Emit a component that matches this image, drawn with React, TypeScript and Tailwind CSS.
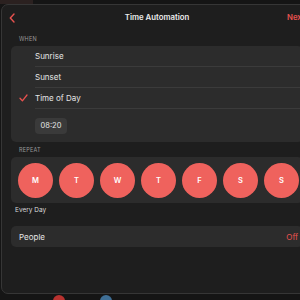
const days = ["M", "T", "W", "T", "F", "S", "S"];

function Row({ label, checked }: { label: string; checked?: boolean }) {
  return (
    <div className="flex h-[20px] items-center">
      <div className="flex w-[24px] items-center justify-center">
        {checked && (
          <svg width="9" height="8" viewBox="0 0 9 8" fill="none">
            <path d="M1 4.2 L3.4 6.8 L8 1" stroke="#e8524f" strokeWidth="1.3" strokeLinecap="round" strokeLinejoin="round" />
          </svg>
        )}
      </div>
      <span className="text-[8px] text-[#e6e6e6]">{label}</span>
    </div>
  );
}

function Divider() {
  return <div className="ml-[24px] h-px bg-[#3b3b3b]" />;
}

export default function App() {
  return (
    <div
      className="relative h-[300px] w-[300px] overflow-hidden bg-[#151515]"
      style={{ fontFamily: "Inter, 'Liberation Sans', sans-serif" }}
    >
      <div className="absolute left-0 top-0 h-[4px] w-[33px] bg-[#2b2120]" />
      <div className="absolute left-[53px] top-[295px] h-[12px] w-[12px] rounded-full bg-[#b8322f]" />
      <div className="absolute left-[100px] top-[295px] h-[12px] w-[12px] rounded-full bg-[#3f6f96]" />

      <div className="relative ml-[1px] mt-[4px] h-[290px] w-[312px] rounded-[7px] border border-[#363636] bg-[#1e1e1e]">
        {/* Header */}
        <div className="relative flex h-[26px] items-center">
          <svg className="absolute left-[7px] top-[8px]" width="6" height="10" viewBox="0 0 6 10" fill="none">
            <path d="M5 1 L1.3 5 L5 9" stroke="#e8524f" strokeWidth="1.4" strokeLinecap="round" strokeLinejoin="round" />
          </svg>
          <div className="w-full text-center text-[7.8px] font-semibold text-[#ececec]">Time Automation</div>
          <span className="absolute left-[285px] text-[7.8px] font-semibold text-[#e8524f]">Next</span>
        </div>

        <div className="px-[9px]">
          <div className="flex h-[15px] items-center pl-[8px] pt-[1px] text-[5.5px] tracking-[0.2px] text-[#9a9a9a]">WHEN</div>
          <div className="rounded-[5px] bg-[#2c2c2c]">
            <Row label="Sunrise" />
            <Divider />
            <Row label="Sunset" />
            <Divider />
            <Row label="Time of Day" checked />
            <Divider />
            <div className="pb-[8px] pl-[24px] pt-[9px]">
              <div className="flex h-[16px] w-[32px] items-center justify-center rounded-[4px] bg-[#3a3a3a] text-[7.5px] text-[#e6e6e6]">
                08:20
              </div>
            </div>
          </div>

          <div className="flex h-[15px] items-center pl-[8px] pt-[2px] text-[5.5px] tracking-[0.2px] text-[#9a9a9a]">REPEAT</div>
          <div className="flex gap-[6px] rounded-[5px] bg-[#2c2c2c] pb-[5px] pl-[7px] pt-[6px]">
            {days.map((d, i) => (
              <div
                key={i}
                className="flex h-[35px] w-[35px] shrink-0 items-center justify-center rounded-full bg-[#ef625d] text-[7.5px] font-semibold text-white"
              >
                {d}
              </div>
            ))}
          </div>
          <div className="flex h-[16px] items-center pl-[4px] text-[6.5px] text-[#d8d8d8]">Every Day</div>

          <div className="mt-[7px] flex h-[21px] items-center rounded-[5px] bg-[#2c2c2c] pl-[8px] pr-[5px]">
            <span className="text-[8px] text-[#e6e6e6]">People</span>
            <span className="ml-auto text-[8px] text-[#e8524f]">Off</span>
          </div>
        </div>
      </div>
    </div>
  );
}
